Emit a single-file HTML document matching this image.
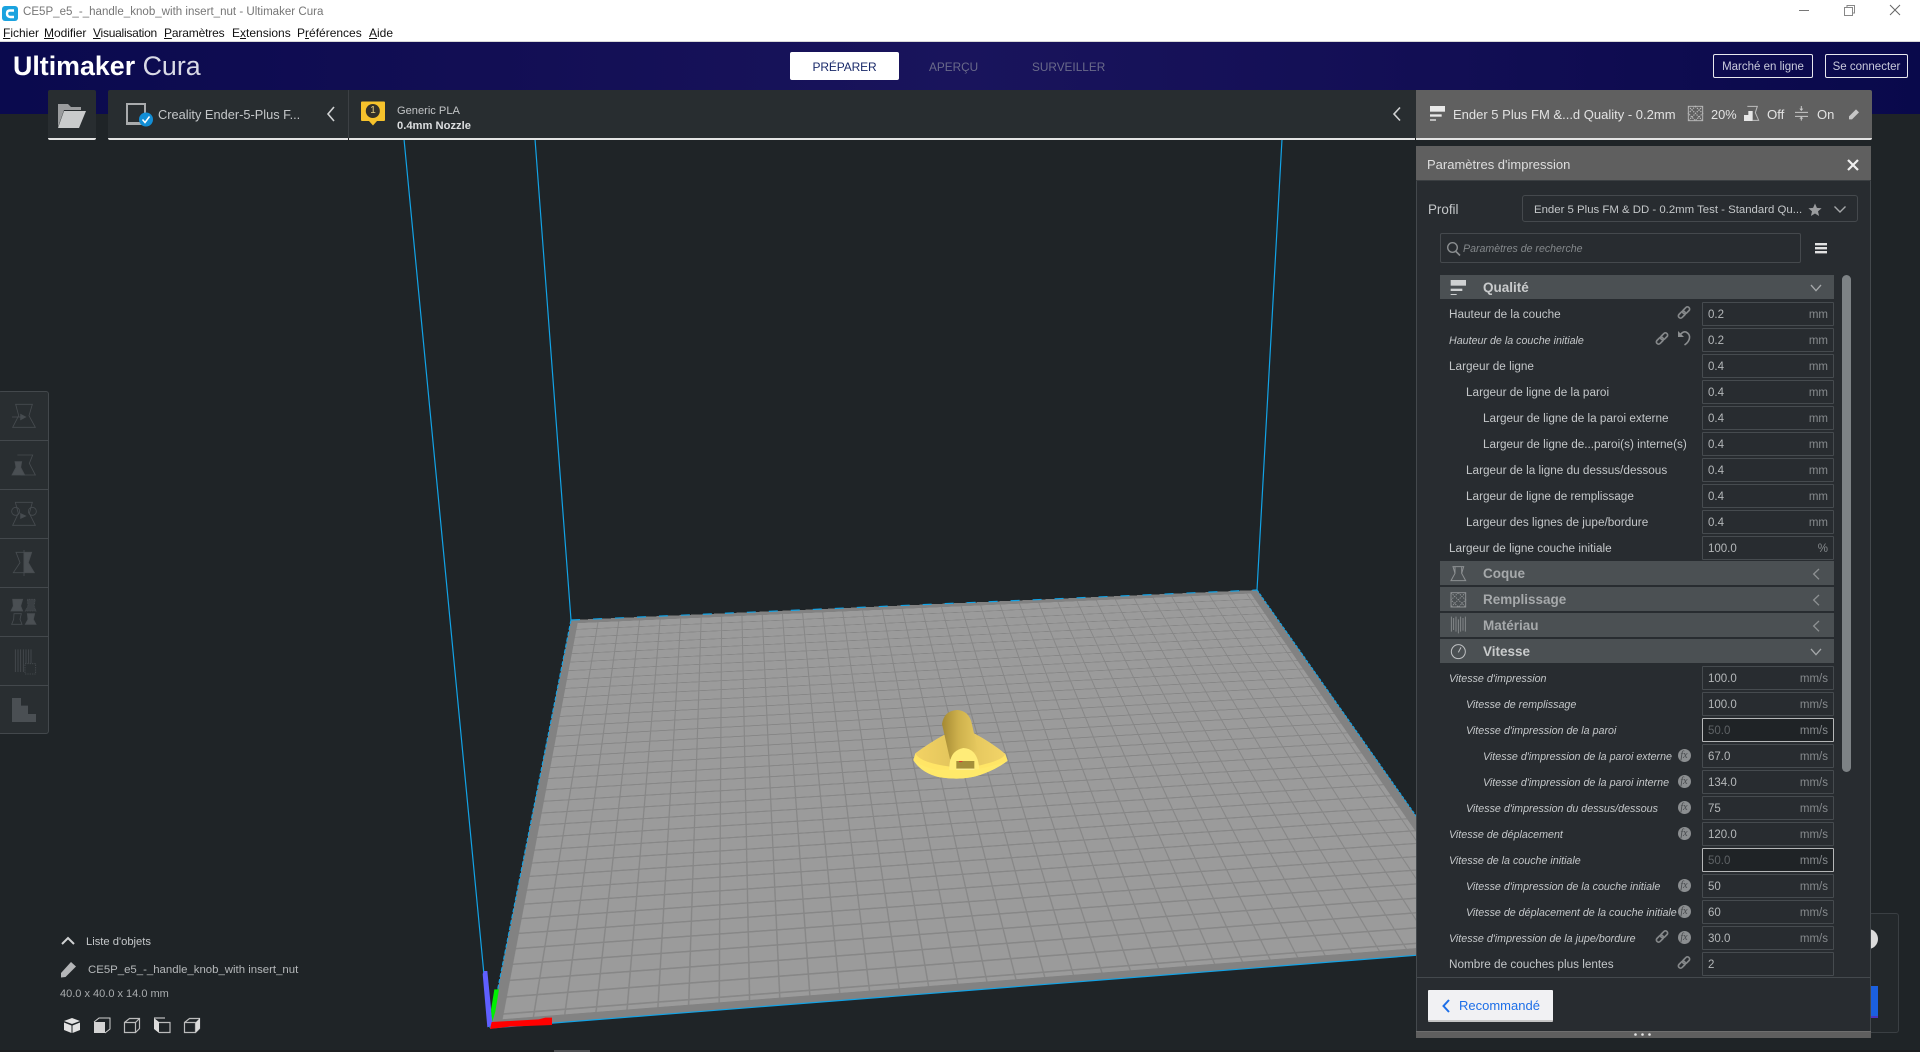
<!DOCTYPE html>
<html lang="fr"><head><meta charset="utf-8"><title>Ultimaker Cura</title>
<style>
html,body{margin:0;padding:0}
body{width:1920px;height:1052px;overflow:hidden;position:relative;background:#1f2427;font-family:"Liberation Sans","DejaVu Sans",sans-serif}
.a{position:absolute;white-space:nowrap}
.m{top:26px;font-size:12px;line-height:14px;color:#111}
.row{position:absolute;left:1440px;width:394px;height:24px;line-height:26px;font-size:11.75px;color:#c4c7c9;white-space:nowrap}
.row>span.l{position:absolute;left:9px}
.row.l1>span.l{left:26px}
.row.l2>span.l{left:43px}
.it>span.l{font-style:italic;font-size:10.7px}
.b{position:absolute;left:262px;top:0;width:132px;height:24px;box-sizing:border-box;border:1px solid #464b4f;border-radius:1px;line-height:24px;padding-left:5px;font-size:11.5px;color:#b5b8ba}
.b em{position:absolute;right:5px;top:0;font-style:normal;color:#868a8d}
.b.h{border-color:#b5b7b8;background:#1f2326;color:#5f6366}
.fx{position:absolute;left:237.5px;top:5px;width:13px;height:13px;border-radius:50%;background:#8b8e90;color:#45484b;font:italic 10px/13px "Liberation Serif",serif;text-align:center}
.cat{position:absolute;left:1440px;width:394px;height:24px;background:#4b5053;color:#c9cbcc;font-size:13.5px;line-height:26px;font-weight:bold}
.cat span{position:absolute;left:43px}
.cat.d{color:#a6a9ab}
svg{position:absolute;left:0;top:0;overflow:visible}
</style></head><body>

<!-- 3D scene -->
<div class="a" style="left:0;top:0;width:700px;height:700px;transform-origin:0 0;transform:matrix3d(1.09340,.010371,0,.00009021,-.35540,.079986,0,-.00048916,0,0,1,0,571,620,0,1);background:#828282">
  <div class="a" style="left:7px;top:9px;right:9px;bottom:9px;background-color:#9b9b9b;background-image:linear-gradient(#878787 0,#878787 2px,transparent 2px),linear-gradient(90deg,#878787 0,#878787 1.2px,transparent 1.2px);background-size:20px 20px;background-position:-1px -5px"></div>
</div>
<svg width="1920" height="1052" viewBox="0 0 1920 1052">
  <g fill="none" stroke="#12a3e6" stroke-width="1.2">
    <path d="M404 139L489 1027M535 139L571 620M1282 139L1257 590"/>
    <path d="M571 620L1257 590" stroke-dasharray="9 13"/>
    <path d="M571 620L490 1028" stroke-dasharray="4 2"/>
    <path d="M1257 590L1509 948" stroke-dasharray="3 1.5"/>
    <path d="M490 1028L1509 948"/>
  </g>
  <!-- axes -->
  <g transform="translate(460,900) scale(.33333)">
    <path d="M68 222L72 213L82 213L98 375L82 382Z" fill="#5f5fff"/>
    <path d="M103 268L117 268L106 335L97 365L93 330Z" fill="#00f000"/>
    <path d="M90 387L95 366L236 358L256 353L276 353L276 375L150 380Z" fill="#ff0000"/>
  </g>
  <!-- model -->
  <defs>
    <linearGradient id="cyl" x1="0" y1="0" x2="1" y2="0"><stop offset="0" stop-color="#a48932"/><stop offset=".45" stop-color="#cdb04c"/><stop offset="1" stop-color="#e6c95f"/></linearGradient>
    <linearGradient id="cone" x1="0" y1="0" x2="1" y2="0"><stop offset="0" stop-color="#f2d264"/><stop offset=".5" stop-color="#e0c25a"/><stop offset="1" stop-color="#f2d468"/></linearGradient>
  </defs>
  <g transform="translate(880,680) scale(.33333)">
    <path d="M100 240L106 220Q150 188 192 165L282 160Q335 188 376 222L383 242Q350 268 300 285Q250 302 180 292Q125 280 100 240Z" fill="#ffe566"/>
    <path d="M106 220Q150 188 192 165L282 160Q335 188 376 222Q370 240 300 256L210 260Q120 248 106 220Z" fill="url(#cone)"/>
    <path d="M100 240Q125 280 180 292Q250 302 300 285Q350 268 383 242Q350 256 300 266L170 270Q125 260 100 240Z" fill="#ffe96a"/>
    <path d="M186 132Q192 92 232 90Q264 92 274 125L294 212L210 238Z" fill="url(#cyl)"/>
    <path d="M208 270Q206 212 250 204Q294 206 298 268Z" fill="#ffec78"/>
    <rect x="229" y="243" width="54" height="23" fill="#a48f3a"/>
    <rect x="229" y="266" width="54" height="3" fill="#fff3a0"/>
    <rect x="237" y="243" width="10" height="3" fill="#d33"/>
  </g>
</svg>

<!-- header -->
<div class="a" style="left:0;top:0;width:1920px;height:41px;background:#fff"></div>
<div class="a" style="left:0;top:41px;width:1920px;height:1px;background:#d8d8d8"></div>
<div class="a" style="left:0;top:42px;width:1920px;height:72px;background:linear-gradient(90deg,#0a0a4e 0,#120e54 25%,#19145c 50%,#120e54 75%,#09094b 100%)"></div>
<svg width="24" height="24" viewBox="0 0 24 24" style="left:2px;top:4px"><rect x="0" y="2" width="16" height="15" rx="3" fill="#1ba3df"/><path d="M12 6.5H8Q5 6.5 5 9.5T8 13H12" fill="none" stroke="#fff" stroke-width="2.4"/></svg>
<div class="a" style="left:23px;top:5px;font-size:11.55px;line-height:15px;color:#767676">CE5P_e5_-_handle_knob_with insert_nut - Ultimaker Cura</div>
<div class="a m" style="left:3px"><u>F</u>ichier</div>
<div class="a m" style="left:44px;letter-spacing:-.05px"><u>M</u>odifier</div>
<div class="a m" style="left:93px;letter-spacing:-.25px"><u>V</u>isualisation</div>
<div class="a m" style="left:164px;letter-spacing:-.15px"><u>P</u>aramètres</div>
<div class="a m" style="left:232px">E<u>x</u>tensions</div>
<div class="a m" style="left:297px">P<u>r</u>éférences</div>
<div class="a m" style="left:369px"><u>A</u>ide</div>
<svg width="1920" height="40" viewBox="0 0 1920 40"><g fill="none" stroke="#777" stroke-width="1"><path d="M1799 10.5H1809"/><path d="M1844.5 7.5H1852.5V15.5H1844.5ZM1847 7.5V5.5H1854.5V13H1852.5" stroke="#888"/><path d="M1890 5L1900 15M1900 5L1890 15" stroke="#666"/></g></svg>
<div class="a" style="left:13px;top:49px;font-size:26.8px;line-height:34px;font-weight:bold;color:#fff">Ultimaker <span style="font-weight:normal;color:#d9dae6">Cura</span></div>
<div class="a" style="left:790px;top:52px;width:109px;height:28px;background:#fff;border-radius:2px;text-align:center;font-size:12px;letter-spacing:-.15px;line-height:30px;color:#1a2a6a">PRÉPARER</div>
<div class="a" style="left:929px;top:60px;font-size:11.8px;line-height:15px;color:#6a6a8a">APERÇU</div>
<div class="a" style="left:1032px;top:60px;font-size:11.8px;line-height:15px;color:#6a6a8a">SURVEILLER</div>
<div class="a" style="left:1713px;top:54px;width:100px;height:24px;box-sizing:border-box;border:1px solid #e8e8ee;border-radius:2px;text-align:center;font-size:11.5px;line-height:24px;color:#c9cbdc">Marché en ligne</div>
<div class="a" style="left:1825px;top:54px;width:83px;height:24px;box-sizing:border-box;border:1px solid #e8e8ee;border-radius:2px;text-align:center;font-size:11.5px;line-height:24px;color:#c9cbdc">Se connecter</div>

<!-- toolbar -->
<div class="a" style="left:48px;top:90px;width:48px;height:49.5px;box-sizing:border-box;background:#282d30;border-bottom:2px solid #e4e4e4;border-radius:2px"></div>
<div class="a" style="left:108px;top:90px;width:1308px;height:49.5px;box-sizing:border-box;background:#282d30;border-bottom:2px solid #e4e4e4;border-radius:2px 0 0 2px"></div>
<div class="a" style="left:348px;top:90px;width:1px;height:49px;background:#3c4044"></div>
<div class="a" style="left:348px;top:138px;width:1px;height:2px;background:#222"></div>
<div class="a" style="left:1416px;top:90px;width:456px;height:49.5px;box-sizing:border-box;background:#606060;border-bottom:2px solid #e4e4e4;border-radius:0 2px 2px 0"></div>
<div class="a" style="left:1415px;top:138px;width:1px;height:2px;background:#222"></div>
<svg width="1920" height="150" viewBox="0 0 1920 150">
  <path d="M58 104H68L71 107H81V110H64L58 127Z" fill="#9a9c9e"/><path d="M64 111H86L79 128H58Z" fill="#c9cbcc"/>
  <path d="M127 104H145V124H127Z" fill="none" stroke="#a9abad" stroke-width="2"/><rect x="127" y="122" width="18" height="3" fill="#a9abad"/>
  <circle cx="146" cy="119.5" r="7" fill="#128ed6"/><path d="M142.5 119.5L145 122.5L149.5 116.5" fill="none" stroke="#fff" stroke-width="1.5"/>
  <path d="M334 107L328 114L334 121" fill="none" stroke="#d0d2d3" stroke-width="1.6"/>
  <path d="M361 102.5Q361 101.5 362 101.5H384Q385 101.5 385 102.5V120Q385 121 384 121H377L373 125.5L369 121H362Q361 121 361 120Z" fill="#f6c22c"/>
  <circle cx="372.8" cy="111" r="7" fill="#32302a"/>
  <path d="M1400 107.5L1394 114L1400 120.5" fill="none" stroke="#d0d2d3" stroke-width="1.6"/>
  <g transform="translate(1400,0) scale(.33333)">
    <rect x="90" y="318" width="45" height="17" fill="#e9e9e9"/><rect x="90" y="343" width="35" height="7" fill="#e9e9e9"/><rect x="90" y="358" width="18" height="4" fill="#e9e9e9"/>
    <rect x="865" y="319" width="43" height="43" fill="none" stroke="#b4b4b4" stroke-width="3"/><path d="M865 319L908 362M908 319L865 362M886 319L908 340L886 362L865 340Z" fill="none" stroke="#b8b8b8" stroke-width="3.5" stroke-dasharray="4 3"/>
    <path d="M1042 319H1072L1066 338L1076 361H1058" fill="none" stroke="#bdbdbd" stroke-width="3"/><path d="M1032 363V345H1045V333H1058V363Z" fill="#e6e6e6"/>
    <path d="M1185 337H1224M1185 349H1224M1204 318V331M1204 355V362" fill="none" stroke="#c8c8c8" stroke-width="3"/><path d="M1198 326L1204 333L1210 326ZM1198 356L1204 350L1210 356Z" fill="#c8c8c8"/>
    <path d="M1347 349L1368 328L1377 337L1356 358L1347 358Z" fill="#c6c6c6"/>
  </g>
</svg>
<div class="a" style="left:397px;top:104px;font-size:11.1px;line-height:14px;color:#c2c4c6">Generic PLA</div>
<div class="a" style="left:397px;top:118.5px;font-size:11.2px;line-height:14px;font-weight:bold;color:#dcdee0">0.4mm Nozzle</div>
<div class="a" style="left:369px;top:104px;width:8px;text-align:center;font-size:10px;line-height:14px;color:#e8d080">1</div>
<div class="a" style="left:158px;top:107px;font-size:12.8px;line-height:16px;color:#c4c7c9">Creality Ender-5-Plus F...</div>
<div class="a" style="left:1453px;top:107px;font-size:13px;line-height:16px;color:#e2e2e2">Ender 5 Plus FM &amp;...d Quality - 0.2mm</div>
<div class="a" style="left:1711px;top:107px;font-size:12.8px;line-height:16px;color:#e2e2e2">20%</div>
<div class="a" style="left:1767px;top:107px;font-size:13.2px;line-height:16px;color:#e2e2e2">Off</div>
<div class="a" style="left:1817px;top:107px;font-size:13px;line-height:16px;color:#e2e2e2">On</div>

<!-- left tools -->
<div class="a" style="left:-2px;top:391px;width:51px;height:343px;box-sizing:border-box;background:#292e31;border:1px solid #43484c;border-radius:3px"></div>
<svg width="100" height="740" viewBox="0 0 100 740">
  <g fill="#43484c"><rect x="0" y="440" width="48" height="1"/><rect x="0" y="489" width="48" height="1"/><rect x="0" y="538" width="48" height="1"/><rect x="0" y="587" width="48" height="1"/><rect x="0" y="636" width="48" height="1"/><rect x="0" y="685" width="48" height="1"/></g>
  <g transform="translate(0,380) scale(.33333)" fill="none" stroke="#474c50" stroke-width="2.5">
    <path d="M47 73H97L87 107L106 142H38L56 107Z"/><path d="M36 111H62"/><path d="M62 103L77 111L62 119Z" fill="#474c50"/>
    <path d="M52 225H98L88 250L106 285H62"/><path d="M45 245H65L62 262L74 285H36L48 262Z" fill="#4a4f53"/>
    <path d="M46 367H97L88 400L106 436H38L55 400Z"/><circle cx="47" cy="394" r="12"/><circle cx="97" cy="394" r="12"/><path d="M62 401L77 408L62 415Z" fill="#474c50"/>
    <path d="M48 517H72V578H40L60 548Z"/><path d="M72 517H95L85 548L103 578H72Z" fill="#4a4f53"/><path d="M72 510V588"/>
    <path d="M38 658H68L62 678L68 693H33L40 678Z" fill="#4a4f53"/><path d="M82 658H106L102 678L108 693H76L84 678Z" fill="#3a3f43" stroke-dasharray="3 2"/>
    <path d="M42 701H64L60 718L66 733H35L41 718Z"/><path d="M82 701H104L100 718L108 733H76L84 718Z" fill="#4a4f53"/>
    <path d="M46 808V876M54 808V876M62 808V876M70 808V876M78 808V850M86 808V850M93 808V850" stroke-width="2.5"/><rect x="75" y="851" width="32" height="31" stroke-dasharray="4 3"/>
    <path d="M36 954H63V977H84V1002H108V1026H36Z" fill="#4a4f53" stroke="none"/>
  </g>
</svg>

<!-- bottom-left -->
<div class="a" style="left:86px;top:934px;font-size:11.2px;line-height:16px;color:#c4c7c9">Liste d'objets</div>
<div class="a" style="left:88px;top:962px;font-size:11.4px;line-height:16px;color:#b5b8ba">CE5P_e5_-_handle_knob_with insert_nut</div>
<div class="a" style="left:60px;top:986px;font-size:11px;line-height:16px;color:#a9acae">40.0 x 40.0 x 14.0 mm</div>
<svg width="300" height="1052" viewBox="0 0 300 1052">
  <path d="M62 944L68 938L74 944" fill="none" stroke="#d0d2d3" stroke-width="2"/>
  <path d="M61 973L71 962L76 966.5L65.5 977L61 977.5Z" fill="#b4b6b8"/>
  <path d="M64 1021L72 1018L80 1021L72 1024Z M64 1022.5L71.5 1025.5V1033L64 1030Z M80 1022.5L72.5 1025.5V1033L80 1030Z" fill="#e2e2e2"/>
  <rect x="94" y="1022" width="11" height="11" fill="#d4d4d4"/><path d="M94 1022L99 1018H110V1029L105 1033" fill="none" stroke="#cfcfcf"/>
  <path d="M124.5 1022.5H135.5V1032.5H124.5ZM124.5 1022.5L129.5 1018.5H139.5V1028.5L135.5 1032.5M135.5 1022.5L139.5 1018.5" fill="none" stroke="#bbb" stroke-width="1.2"/>
  <path d="M154 1018L159 1022V1033L154 1029Z" fill="#dcdcdc"/><path d="M154 1018H165M159 1022.5H170V1032.5H159" fill="none" stroke="#bbb" stroke-width="1.2"/>
  <path d="M184.5 1022.5H195.5V1032.5H184.5ZM184.5 1022.5L189.5 1018.5H199.5V1028.5L195.5 1032.5" fill="none" stroke="#bbb" stroke-width="1.2"/><path d="M196 1022L200 1018V1028L196 1032Z" fill="#dcdcdc"/>
</svg>
<div class="a" style="left:0;top:1050px;width:1920px;height:2px;background:#1c1e20"></div>
<div class="a" style="left:554px;top:1050px;width:36px;height:2px;background:#4c4e50"></div>

<!-- action panel behind -->
<div class="a" style="left:1800px;top:913px;width:99px;height:119.5px;box-sizing:border-box;background:#23282b;border:1px solid #3a3f43;border-radius:3px"></div>
<div class="a" style="left:1858px;top:929px;width:20px;height:20px;border-radius:50%;background:#dcdcdc"></div>
<div class="a" style="left:1800px;top:986px;width:78px;height:32px;box-sizing:border-box;background:#1b60df;border-bottom:2px solid #4a35c0"></div>

<!-- settings panel -->
<div class="a" style="left:1416px;top:146px;width:455px;height:892px;box-sizing:border-box;background:#282c30;border:1px solid #44494d;border-radius:2px 2px 0 0"></div>
<div class="a" style="left:1416px;top:146px;width:455px;height:35px;background:#5f5f5f;border-bottom:1px solid #3b3f42;box-sizing:border-box"></div>
<div class="a" style="left:1427px;top:156px;font-size:13px;line-height:17px;color:#dedede">Paramètres d'impression</div>
<div class="a" style="left:1428px;top:201px;font-size:13.4px;line-height:17px;color:#c4c7c9">Profil</div>
<div class="a" style="left:1522px;top:195px;width:336px;height:27px;box-sizing:border-box;border:1px solid #45494d;border-radius:3px"></div>
<div class="a" style="left:1534px;top:202.5px;font-size:11.4px;line-height:15px;color:#c4c7c9">Ender 5 Plus FM &amp; DD - 0.2mm Test - Standard Qu...</div>
<div class="a" style="left:1440px;top:233px;width:361px;height:30px;box-sizing:border-box;border:1px solid #45494d;border-radius:2px"></div>
<div class="a" style="left:1463px;top:242px;font-size:10.6px;line-height:15px;font-style:italic;color:#84888b">Paramètres de recherche</div>

<div class="cat" style="top:275px"><span>Qualité</span></div>
<div class="row"  style="top:302px"><span class="l">Hauteur de la couche</span><span class="b">0.2<em>mm</em></span></div>
<div class="row it" style="top:328px"><span class="l">Hauteur de la couche initiale</span><span class="b">0.2<em>mm</em></span></div>
<div class="row"  style="top:354px"><span class="l">Largeur de ligne</span><span class="b">0.4<em>mm</em></span></div>
<div class="row l1" style="top:380px"><span class="l">Largeur de ligne de la paroi</span><span class="b">0.4<em>mm</em></span></div>
<div class="row l2" style="top:406px"><span class="l">Largeur de ligne de la paroi externe</span><span class="b">0.4<em>mm</em></span></div>
<div class="row l2" style="top:432px"><span class="l">Largeur de ligne de...paroi(s) interne(s)</span><span class="b">0.4<em>mm</em></span></div>
<div class="row l1" style="top:458px"><span class="l">Largeur de la ligne du dessus/dessous</span><span class="b">0.4<em>mm</em></span></div>
<div class="row l1" style="top:484px"><span class="l">Largeur de ligne de remplissage</span><span class="b">0.4<em>mm</em></span></div>
<div class="row l1" style="top:510px"><span class="l">Largeur des lignes de jupe/bordure</span><span class="b">0.4<em>mm</em></span></div>
<div class="row"  style="top:536px"><span class="l">Largeur de ligne couche initiale</span><span class="b">100.0<em>%</em></span></div>
<div class="cat d" style="top:561px"><span>Coque</span></div>
<div class="cat d" style="top:587px"><span>Remplissage</span></div>
<div class="cat d" style="top:613px"><span>Matériau</span></div>
<div class="cat" style="top:639px"><span>Vitesse</span></div>
<div class="row it" style="top:666px"><span class="l">Vitesse d'impression</span><span class="b">100.0<em>mm/s</em></span></div>
<div class="row it l1" style="top:692px"><span class="l">Vitesse de remplissage</span><span class="b">100.0<em>mm/s</em></span></div>
<div class="row it l1" style="top:718px"><span class="l">Vitesse d'impression de la paroi</span><span class="b h">50.0<em>mm/s</em></span></div>
<div class="row it l2" style="top:744px"><span class="l">Vitesse d'impression de la paroi externe</span><span class="fx">fx</span><span class="b">67.0<em>mm/s</em></span></div>
<div class="row it l2" style="top:770px"><span class="l">Vitesse d'impression de la paroi interne</span><span class="fx">fx</span><span class="b">134.0<em>mm/s</em></span></div>
<div class="row it l1" style="top:796px"><span class="l">Vitesse d'impression du dessus/dessous</span><span class="fx">fx</span><span class="b">75<em>mm/s</em></span></div>
<div class="row it" style="top:822px"><span class="l">Vitesse de déplacement</span><span class="fx">fx</span><span class="b">120.0<em>mm/s</em></span></div>
<div class="row it" style="top:848px"><span class="l">Vitesse de la couche initiale</span><span class="b h">50.0<em>mm/s</em></span></div>
<div class="row it l1" style="top:874px"><span class="l">Vitesse d'impression de la couche initiale</span><span class="fx">fx</span><span class="b">50<em>mm/s</em></span></div>
<div class="row it l1" style="top:900px"><span class="l">Vitesse de déplacement de la couche initiale</span><span class="fx">fx</span><span class="b">60<em>mm/s</em></span></div>
<div class="row it" style="top:926px"><span class="l">Vitesse d'impression de la jupe/bordure</span><span class="fx">fx</span><span class="b">30.0<em>mm/s</em></span></div>
<div class="row"  style="top:952px"><span class="l">Nombre de couches plus lentes</span><span class="b">2</span></div>

<div class="a" style="left:1842px;top:275px;width:9px;height:497px;border-radius:5px;background:#7d8285"></div>
<div class="a" style="left:1417px;top:977px;width:453px;height:1px;background:#44494d"></div>
<div class="a" style="left:1417px;top:978px;width:453px;height:53px;background:#282c30"></div>
<div class="a" style="left:1428px;top:990px;width:125px;height:32px;box-sizing:border-box;background:#f1f1f3;border-bottom:2px solid #c4c4c4;border-radius:1px;font-size:13px;line-height:32px;color:#1d6fe8;padding-left:31px">Recommandé</div>
<div class="a" style="left:1416px;top:1031px;width:455px;height:7px;background:#5f5f5f;border-top:1px solid #6e6e6e;box-sizing:border-box"></div>

<svg width="1920" height="1052" viewBox="0 0 1920 1052">
  <defs>
    <g id="ch" fill="none" stroke="#85888a" stroke-width="1.7" transform="rotate(-45 6.5 6.5)"><rect x="-.5" y="4.3" width="8" height="4.4" rx="2.2"/><rect x="5.5" y="4.3" width="8" height="4.4" rx="2.2"/></g>
  </defs>
  <!-- panel header / profile -->
  <path d="M1848 160L1858 170M1858 160L1848 170" stroke="#efefef" stroke-width="2.2" fill="none"/>
  <path d="M1815 203.5L1816.9 207.9L1821.6 208.3L1818 211.4L1819.1 216L1815 213.5L1810.9 216L1812 211.4L1808.4 208.3L1813.1 207.9Z" fill="#9a9c9e"/>
  <path d="M1834.5 206.5L1840 212L1845.5 206.5" fill="none" stroke="#a5a7a9" stroke-width="1.4"/>
  <circle cx="1452.5" cy="247.5" r="4.8" fill="none" stroke="#8b8e90" stroke-width="1.4"/><path d="M1456 251.5L1460 255.5" stroke="#8b8e90" stroke-width="1.6"/>
  <rect x="1815" y="243" width="12" height="2.4" fill="#e2e2e2"/><rect x="1815" y="247" width="12" height="2.4" fill="#e2e2e2"/><rect x="1815" y="251" width="12" height="2.4" fill="#e2e2e2"/>
  <!-- category icons -->
  <g transform="translate(1420,270) scale(.33333)">
    <rect x="92" y="30" width="46" height="17" fill="#cfd1d2"/><rect x="92" y="56" width="35" height="7" fill="#cfd1d2"/><rect x="92" y="72" width="18" height="3" fill="#cfd1d2"/>
    <path d="M1173 45L1188 62L1203 45" fill="none" stroke="#a5a8aa" stroke-width="4"/>
    <g fill="none" stroke="#8d9092" stroke-width="3">
      <path d="M99 890H131L125 910L137 932H93L105 910Z"/><path d="M105 890V910M125 890V910"/>
      <rect x="93" y="968" width="44" height="43"/><path d="M93 968L137 1011M137 968L93 1011M115 968L137 990L115 1011L93 990Z" stroke-dasharray="4 3"/>
      <path d="M94 1040V1085M101 1044V1080M108 1040V1085M115 1048V1090M122 1040V1085M129 1044V1082M136 1040V1085" stroke-width="2.5"/>
      <path d="M1197 897L1181 912L1197 928M1197 975L1181 990L1197 1006M1197 1053L1181 1068L1197 1084" stroke="#8d9092" stroke-width="4"/>
      <path d="M1173 1137L1188 1154L1203 1137" stroke="#a5a8aa" stroke-width="4"/>
    </g>
    <circle cx="115" cy="1145" r="21" fill="none" stroke="#bfc1c3" stroke-width="3"/><path d="M115 1147L123 1132" stroke="#bfc1c3" stroke-width="3"/>
  </g>
  <!-- chain icons -->
  <use href="#ch" x="1677.5" y="306"/>
  <use href="#ch" x="1655.5" y="332"/>
  <use href="#ch" x="1655.5" y="930"/>
  <use href="#ch" x="1677.5" y="956"/>
  <path d="M1680 335Q1683 331 1686 332Q1690 334 1689.5 338Q1689 342 1684.5 345" fill="none" stroke="#8b8e90" stroke-width="1.6"/><path d="M1678 331V337H1684Z" fill="#8b8e90"/>
  <!-- recommended button chevron / drag dots -->
  <path d="M1449 1000L1443.5 1006L1449 1012" fill="none" stroke="#1d6fe8" stroke-width="2"/>
  <g fill="#e4e4e4"><circle cx="1635.5" cy="1034.5" r="1.3"/><circle cx="1642.5" cy="1034.5" r="1.3"/><circle cx="1649.5" cy="1034.5" r="1.3"/></g>
</svg>
</body></html>
